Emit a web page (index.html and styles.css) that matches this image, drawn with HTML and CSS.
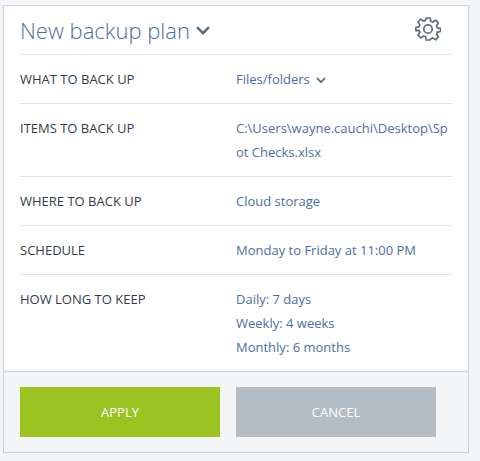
FILE: index.html
```html
<!DOCTYPE html>
<html lang="en">
<head>
<meta charset="utf-8">
<title>New backup plan</title>
<link rel="stylesheet" href="styles.css">
</head>
<body>
<div class="card">
  <div class="body">
    <div class="head">
      <h1 class="title">New backup plan</h1>
      <svg class="title-chev" width="14" height="9" viewBox="0 0 14 9"><path d="M1 1.2 7 7.2l6-6" fill="none" stroke="#5d6b78" stroke-width="2.4"/></svg>
      <svg class="gear" width="26" height="26" viewBox="0 0 26 26"><path d="M11 2h4l.6 3.3 2 .8 2.8-1.9 2.8 2.8-1.9 2.8.8 2 3.3.6v3.1l-3.3.7-.8 2 1.9 2.8-2.8 2.8-2.8-1.9-2 .8L15 24h-4l-.6-3.2-2-.8-2.8 1.9-2.8-2.8 1.9-2.8-.8-2L.6 14.6v-3.1l3.3-.7.8-2-1.9-2.8 2.8-2.8 2.8 1.9 2-.8z" transform="translate(.2 0)" fill="none" stroke="#5f6e7b" stroke-width="1.7" stroke-linejoin="round"/><circle cx="13" cy="13" r="4.2" fill="none" stroke="#5f6e7b" stroke-width="1.7"/></svg>
    </div>
    <div class="row">
      <div class="label">WHAT TO BACK UP</div>
      <div class="value">Files/folders <svg class="chev" width="10" height="7" viewBox="0 0 10 7"><path d="M1 1.2 5 5.2l4-4" fill="none" stroke="#5d6b78" stroke-width="1.7"/></svg></div>
    </div>
    <div class="row">
      <div class="label">ITEMS TO BACK UP</div>
      <div class="value">C:\Users\wayne.cauchi\Desktop\Spot Checks.xlsx</div>
    </div>
    <div class="row">
      <div class="label">WHERE TO BACK UP</div>
      <div class="value">Cloud storage</div>
    </div>
    <div class="row">
      <div class="label">SCHEDULE</div>
      <div class="value">Monday to Friday at 11:00 PM</div>
    </div>
    <div class="row">
      <div class="label">HOW LONG TO KEEP</div>
      <div class="value"><div>Daily: 7 days</div><div>Weekly: 4 weeks</div><div>Monthly: 6 months</div></div>
    </div>
  </div>
  <div class="foot">
    <button class="btn apply">APPLY</button>
    <button class="btn cancel">CANCEL</button>
  </div>
</div>
</body>
</html>
```
FILE: styles.css
```css
html, body { margin: 0; padding: 0; }
body {
  background: #f3f5f7;
  width: 480px;
  height: 461px;
  overflow: hidden;
  font-family: "Open Sans", sans-serif;
  padding-top: 5px;
  padding-left: 3px;
  box-sizing: border-box;
}
.card {
  width: 466px;
  box-sizing: border-box;
  border: 1px solid #c9d0d8;
  background: #fff;
}
.body { padding: 0 16px; }
.head {
  display: flex;
  align-items: center;
  height: 48px;
  border-bottom: 1px solid #e3e5e8;
}
.title {
  margin: 0;
  font-size: 22px;
  font-weight: 300;
  color: #4c6e9f;
}
.title-chev { margin-left: 6px; margin-top: 0; }
.gear { margin-left: auto; margin-right: 11px; margin-top: -2px; }
.row {
  display: flex;
  padding: 12px 0;
  border-bottom: 1px solid #e3e5e8;
  font-size: 13px;
  line-height: 24px;
}
.row:last-child { border-bottom: 0; }
.label { width: 216px; flex: none; color: #333c46; }
.value { flex: 1; color: #4d6e9e; word-break: break-all; }
.chev { margin-left: 3px; }
.foot {
  display: flex;
  gap: 16px;
  padding: 15px 16px;
  background: #f3f5f7;
  border-top: 1px solid #c9d0d8;
}
.btn {
  width: 200px;
  height: 50px;
  border: 0;
  padding: 0;
  color: #fff;
  font: 400 13px "Open Sans", sans-serif;
}
.apply { background: #9bc322; }
.cancel { background: #b3bdc5; }
```
